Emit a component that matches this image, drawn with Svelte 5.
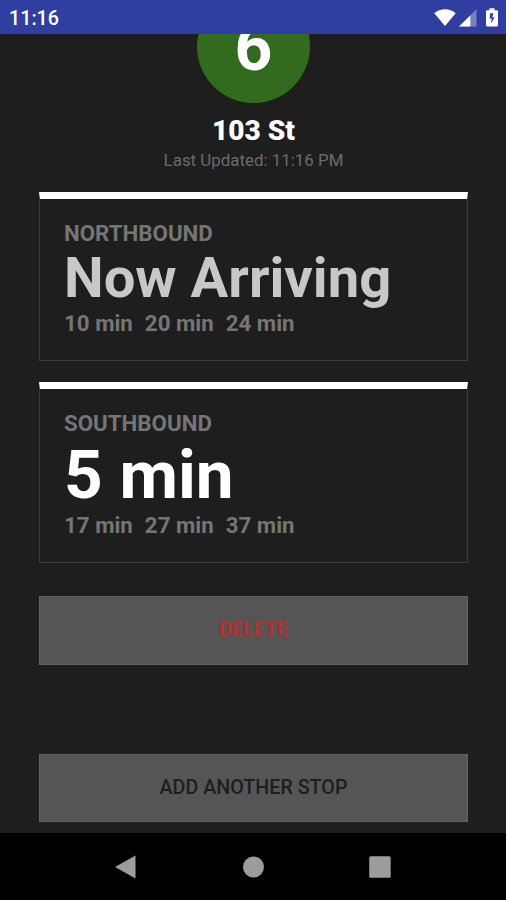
<script lang="ts">
    type Direction = {
        label: string;
        next: string;
        arriving: boolean;
        later: string[];
    };

    const clock = '11:16';
    const route = '6';
    const station = '103 St';
    const lastUpdated = '11:16 PM';

    const directions: Direction[] = [
        { label: 'NORTHBOUND', next: 'Now Arriving', arriving: true, later: ['10 min', '20 min', '24 min'] },
        { label: 'SOUTHBOUND', next: '5 min', arriving: false, later: ['17 min', '27 min', '37 min'] }
    ];
</script>

<div class="screen">
    <header class="status-bar">
        <span class="clock">{clock}</span>
        <svg class="status-icons" width="68" height="22" viewBox="0 0 68 22">
            <path d="M2.3 6.3C8 0.9 18 0.9 23.7 6.3L13 19z" fill="#fff" />
            <path d="M44.5 2.3V19.5H27z" fill="#fff" fill-opacity="0.35" />
            <path d="M38.3 8.4V19.5H27z" fill="#fff" />
            <path d="M57.5 1.2h5v2h2.3q1.2 0 1.2 1.2v13.9q0 1.2-1.2 1.2h-9.6q-1.2 0-1.2-1.2V4.4q0-1.2 1.2-1.2h2.3z" fill="#fff" />
            <path d="M61.4 6.2h-3.2l-.6 5.3h2l-.6 5.3 3.5-6.6h-2.2z" fill="#303f9f" />
        </svg>
    </header>

    <main class="content">
        <div class="route-clip">
            <div class="route">{route}</div>
        </div>
        <h1 class="station">{station}</h1>
        <p class="updated">Last Updated: {lastUpdated}</p>

        {#each directions as direction}
            <section class="card">
                <div class="label">{direction.label}</div>
                <div class="next" class:arriving={direction.arriving}>{direction.next}</div>
                <div class="later">
                    {#each direction.later as time}
                        <span>{time}</span>
                    {/each}
                </div>
            </section>
        {/each}

        <button class="btn delete">DELETE</button>
        <button class="btn add">ADD ANOTHER STOP</button>
    </main>

    <nav class="nav-bar">
        <svg width="26" height="26" viewBox="0 0 26 26"><path d="M2 13 22.5 1.4v23.2z" /></svg>
        <svg width="26" height="26" viewBox="0 0 26 26"><circle cx="13.5" cy="13" r="10.5" /></svg>
        <svg width="26" height="26" viewBox="0 0 26 26"><rect x="2.2" y="2.2" width="21.5" height="21.6" rx="1.5" /></svg>
    </nav>
</div>

<style>
    :global(body) {
        margin: 0;
        background: #1e1e1e;
    }

    .screen {
        display: flex;
        flex-direction: column;
        width: 506px;
        height: 900px;
        overflow: hidden;
        background: #1e1e1e;
        font-family: Roboto, sans-serif;
    }

    .status-bar {
        display: flex;
        flex: none;
        align-items: center;
        justify-content: space-between;
        box-sizing: border-box;
        height: 34px;
        padding: 2px 6px 0 9px;
        background: #303f9f;
        color: #fff;
    }

    .clock {
        font-size: 19.7px;
        font-weight: 500;
    }

    .content {
        display: flex;
        flex: 1;
        flex-direction: column;
        min-height: 0;
        padding: 0 38px 0 39px;
    }

    .route-clip {
        display: flex;
        flex: none;
        align-items: flex-end;
        justify-content: center;
        height: 69px;
        overflow: hidden;
    }

    .route {
        flex: none;
        width: 113px;
        height: 113px;
        border-radius: 50%;
        background: #336b1e;
        color: #fff;
        font-size: 66px;
        font-weight: 700;
        line-height: 116px;
        text-align: center;
    }

    .station {
        margin: 12px 0 0;
        color: #fff;
        font-size: 28px;
        font-weight: 900;
        line-height: 32px;
        text-align: center;
    }

    .updated {
        margin: 3px 0 21px;
        color: #6b6b6b;
        font-size: 16.9px;
        line-height: 21px;
        text-align: center;
    }

    .card {
        flex: none;
        box-sizing: border-box;
        height: 169px;
        margin-bottom: 21px;
        padding: 21px 24px 0;
        border: 1px solid #3c3c3c;
        border-top: 7px solid #fff;
        font-weight: 700;
    }

    .card + .card {
        height: 181px;
        margin-bottom: 33px;
    }

    .label,
    .later {
        color: #757575;
        font-size: 22.3px;
        line-height: 26px;
    }

    .next {
        margin-bottom: -1px;
        color: #fff;
        font-size: 67.5px;
        line-height: 77px;
    }

    .next.arriving {
        color: #c8c8c8;
        font-size: 56.2px;
        line-height: 65px;
    }

    .later {
        display: flex;
        gap: 12px;
    }

    .btn {
        flex: none;
        height: 69px;
        padding: 0 0 3px;
        border: 1px solid #626262;
        border-radius: 0;
        background: #555;
        font-family: inherit;
        font-size: 19.7px;
        font-weight: 500;
    }

    .delete {
        margin-bottom: 89px;
        color: #c62828;
    }

    .add {
        height: 68px;
        padding-bottom: 2px;
        color: #1e1e1e;
    }

    .nav-bar {
        display: flex;
        flex: none;
        align-items: center;
        justify-content: space-between;
        box-sizing: border-box;
        height: 67px;
        padding: 0 113px;
        background: #000;
        fill: #9c9c9c;
    }
</style>
